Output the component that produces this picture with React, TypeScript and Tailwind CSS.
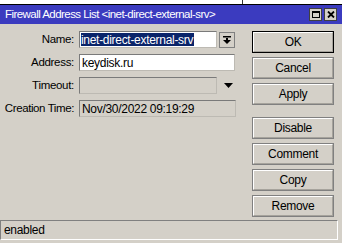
import React from "react";

const Field = ({ children, className = "" }: { children?: React.ReactNode; className?: string }) => (
  <div
    className={`h-[17px] border border-t-[#7a7a7a] border-l-[#7a7a7a] border-r-[#bdbab3] border-b-[#bdbab3] flex items-center px-[1px] ${className}`}
  >
    {children}
  </div>
);

const Btn = ({ label, main = false }: { label: string; main?: boolean }) => (
  <div
    className={`h-[22px] w-[82px] flex items-center justify-center ${
      main ? "border border-black" : "border border-[#808080]"
    }`}
  >
    <div className="w-full h-full border border-t-white border-l-white border-r-[#a6a39c] border-b-[#a6a39c] flex items-center justify-center text-[12px]">
      {label}
    </div>
  </div>
);

export default function App() {
  return (
    <div className="w-[342px] h-[243px] bg-[#d4d0c8] flex flex-col text-black font-['Liberation_Sans',sans-serif] text-[11px] tracking-[-0.3px] leading-none overflow-hidden">
      <div className="h-[5px] bg-white border-b border-black flex">
        <div className="w-[243px] h-[4px] border-r border-[#333]" />
      </div>

      {/* title bar */}
      <div className="h-[19px] bg-[#3b3bbf] flex items-center pl-[5px] pr-[5px] text-white">
        <span className="flex-1 text-[11.5px] tracking-[-0.55px]">Firewall Address List &lt;inet-direct-external-srv&gt;</span>
        <div className="flex gap-[2px]">
          <div className="w-[13px] h-[13px] bg-[#d4d0c8] border border-[#404040] flex items-center justify-center">
            <div className="w-[8px] h-[7px] border border-black border-t-2" />
          </div>
          <div className="w-[13px] h-[13px] bg-[#d4d0c8] border border-[#404040] flex items-center justify-center">
            <svg width="8" height="7" viewBox="0 0 8 7">
              <path d="M1 0.5 L7 6.5 M7 0.5 L1 6.5" stroke="black" strokeWidth="1.8" />
            </svg>
          </div>
        </div>
      </div>

      {/* body */}
      <div className="flex-1 flex">
        <div className="w-[252px] pt-[7px] flex flex-col gap-[6px]">
          <div className="flex items-center">
            <span className="w-[74px] text-right text-[11.5px]">Name:</span>
            <Field className="ml-[5px] w-[138px] bg-white">
              <span className="bg-[#0a246a] text-white text-[12px] h-[13px] flex items-center pr-[1px]">
                inet-direct-external-srv
              </span>
            </Field>
            <div className="ml-[2px] w-[16px] h-[16px] border border-[#808080] flex items-center justify-center">
              <svg width="8" height="8" viewBox="0 0 8 8">
                <rect x="0" y="0" width="8" height="1.5" fill="black" />
                <rect x="3" y="2" width="2" height="2" fill="black" />
                <path d="M0 4 L8 4 L4 8 Z" fill="black" />
              </svg>
            </div>
          </div>
          <div className="flex items-center">
            <span className="w-[74px] text-right text-[11.5px]">Address:</span>
            <Field className="ml-[5px] w-[156px] bg-white">
              <span className="text-[12px] pl-[1px]">keydisk.ru</span>
            </Field>
          </div>
          <div className="flex items-center">
            <span className="w-[74px] text-right text-[11.5px]">Timeout:</span>
            <Field className="ml-[5px] w-[138px]" />
            <svg className="ml-[7px]" width="9" height="5" viewBox="0 0 9 5">
              <path d="M0 0 L9 0 L4.5 5 Z" fill="black" />
            </svg>
          </div>
          <div className="flex items-center">
            <span className="w-[74px] text-right text-[11.5px] tracking-[-0.4px]">Creation Time:</span>
            <Field className="ml-[5px] w-[157px]">
              <span className="text-[12px] pl-[1px]">Nov/30/2022 09:19:29</span>
            </Field>
          </div>
        </div>

        <div className="pt-[7px] flex flex-col gap-[4px]">
          <Btn label="OK" main />
          <Btn label="Cancel" />
          <Btn label="Apply" />
          <div className="h-[4px]" />
          <Btn label="Disable" />
          <Btn label="Comment" />
          <Btn label="Copy" />
          <Btn label="Remove" />
        </div>
      </div>

      {/* status bar */}
      <div className="w-[338px] h-[20px] border border-t-[#808080] border-l-[#808080] border-r-white border-b-white flex items-center pl-[3px] text-[12px]">
        enabled
      </div>
      <div className="h-[3px]" />
    </div>
  );
}
